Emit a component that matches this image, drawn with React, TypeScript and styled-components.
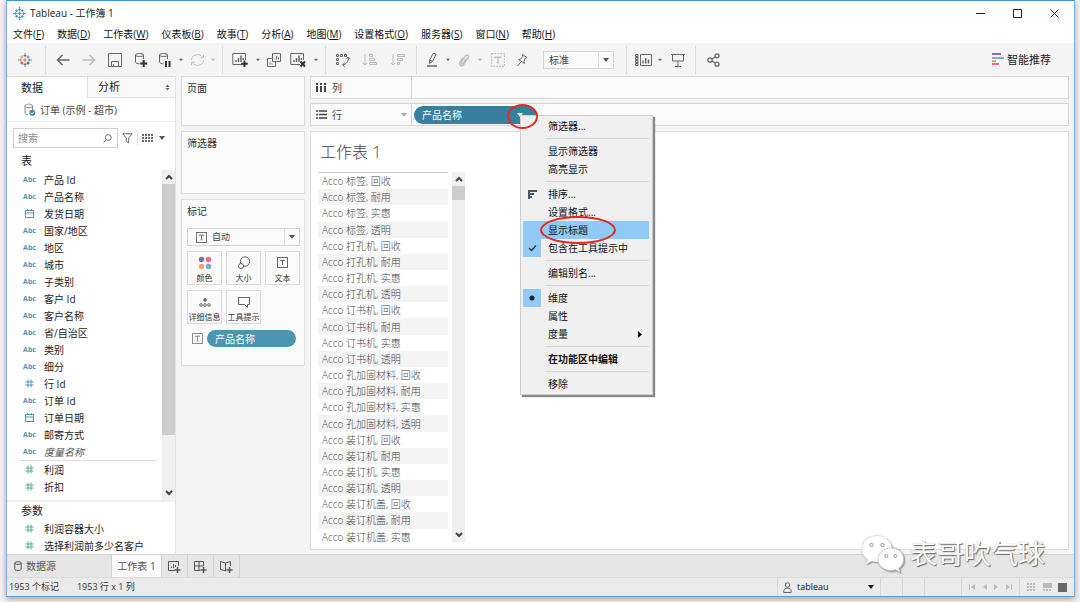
import React from 'react';
import styled, { createGlobalStyle, css } from 'styled-components';

const blue = '#4b97b3';
const green = '#4fb08c';
const line = '#dcdcdc';
const grey = '#666';

const GlobalStyle = createGlobalStyle`
  * { box-sizing: border-box; }
  html, body { margin: 0; padding: 0; background: #f3f3f3; }
  body, button, input, select {
    font-family: 'Open Sans', 'Noto Sans CJK SC', sans-serif;
    font-size: 10px;
    line-height: 16px;
    color: #333;
  }
  button { border: 0; padding: 0; margin: 0; background: none; }
  h1, h2, ul { margin: 0; padding: 0; font-weight: 400; list-style: none; }
  svg { display: block; flex: none; }
`;

/* ---------- window ---------- */
const Page = styled.div`
  height: 100vh;
  padding: 0 5px 5px 6px;
  overflow: hidden;
`;
const Window = styled.div`
  height: 100%;
  display: flex;
  flex-direction: column;
  position: relative;
  border: 1px solid #7db3e2;
  border-top-color: #4496da;
  border-bottom-color: #5c9fd6;
  background: #f4f4f4;
  box-shadow: 0 2px 6px rgba(0, 0, 0, 0.35);
`;
const TitleBar = styled.header`
  height: 24px;
  flex: none;
  display: flex;
  align-items: center;
  gap: 4px;
  padding: 0 14px 0 6px;
  background: #fff;
  color: #222;
`;
const WindowButtons = styled.div`
  margin-left: auto;
  display: flex;
  gap: 25px;
`;
const WindowButton = styled.button`
  width: 12px;
  height: 12px;
  display: grid;
  place-items: center;
`;
const MenuBar = styled.nav`
  height: 18px;
  flex: none;
  display: flex;
  align-items: center;
  gap: 13px;
  padding: 0 6px;
  background: #fff;
`;
const MenuButton = styled.button`
  color: #111;
  white-space: nowrap;
`;

/* ---------- toolbar ---------- */
const Toolbar = styled.div`
  height: 33px;
  flex: none;
  display: flex;
  align-items: center;
  padding: 0 23px 0 2px;
`;
const Tool = styled.button<{ $w?: number; $off?: boolean }>`
  width: ${(p) => p.$w ?? 26}px;
  height: 26px;
  flex: none;
  display: grid;
  place-items: center;
  color: ${(p) => (p.$off ? '#bdbdbd' : '#666')};
`;
const Divider = styled.span`
  width: 1px;
  height: 28px;
  margin: 0 4px;
  background: ${line};
`;
const Recommend = styled.button`
  margin-left: auto;
  display: flex;
  align-items: center;
  gap: 3px;
  font-size: 11px;
  color: #222;
`;
const SelectBox = styled.div<{ $kind: 'toolbar' | 'card' | 'status' }>`
  height: 18px;
  display: flex;
  align-items: center;
  color: ${grey};
  ${(p) =>
    p.$kind !== 'status' &&
    css`
      border: 1px solid #d4d4d4;
      background: #fafafa;
    `}
  ${(p) => p.$kind === 'toolbar' && css`width: 71px; margin: 0 8px 0 10px;`}
  ${(p) => p.$kind === 'card' && css`width: 113px; padding-left: 8px; margin-top: 9px;`}
  ${(p) => p.$kind === 'status' && css`width: 103px; padding: 0 2px 0 5px;`}
`;
const Select = styled.select<{ $small?: boolean; $dark?: boolean }>`
  appearance: none;
  flex: 1;
  min-width: 0;
  height: 16px;
  padding: 0 5px;
  border: 0;
  background: transparent;
  font-size: ${(p) => (p.$small ? 9 : 10)}px;
  color: ${(p) => (p.$dark ? '#111' : '#444')};
`;
const SelectArrow = styled.span<{ $plain?: boolean }>`
  width: 15px;
  height: 100%;
  flex: none;
  display: grid;
  place-items: center;
  border-left: ${(p) => (p.$plain ? '0' : '1px solid #dedede')};
  color: ${(p) => (p.$plain ? '#111' : '#555')};
  pointer-events: none;
`;

/* ---------- body ---------- */
const Body = styled.main`
  flex: 1;
  min-height: 0;
  display: flex;
  gap: 5px;
  padding-right: 5px;
`;
const DataPane = styled.aside`
  width: 169px;
  flex: none;
  display: flex;
  flex-direction: column;
  background: #fff;
  border-top: 1px solid ${line};
  border-right: 1px solid #e2e2e2;
`;
const PaneTabs = styled.div`
  display: flex;
  height: 21px;
  flex: none;
`;
const PaneTab = styled.button<{ $active?: boolean }>`
  width: ${(p) => (p.$active ? '80px' : 'auto')};
  flex: ${(p) => (p.$active ? 'none' : '1')};
  display: flex;
  align-items: center;
  justify-content: space-between;
  padding: 0 5px 0 ${(p) => (p.$active ? 14 : 10)}px;
  font-size: 11px;
  color: #222;
  ${(p) =>
    !p.$active &&
    css`
      background: #f9f9f9;
      border-left: 1px solid ${line};
      border-bottom: 1px solid ${line};
    `}
`;
const Source = styled.button`
  height: 24px;
  flex: none;
  display: flex;
  align-items: center;
  gap: 4px;
  padding-left: 17px;
  border-bottom: 1px solid #ececec;
  color: #444;
`;
const SearchRow = styled.div`
  display: flex;
  align-items: center;
  gap: 4px;
  padding: 6px 10px 4px 6px;
  color: ${grey};
`;
const SearchField = styled.label`
  width: 105px;
  height: 20px;
  display: flex;
  align-items: center;
  border: 1px solid #d0d0d0;
  padding-right: 5px;
`;
const SearchInput = styled.input`
  flex: 1;
  min-width: 0;
  border: 0;
  padding: 0 0 0 4px;
  outline: 0;
  &::placeholder { color: #8c8c8c; }
`;
const GroupTitle = styled.h2`
  flex: none;
  padding-left: 14px;
  font-size: 11px;
  line-height: 18px;
  color: #222;
`;
const FieldArea = styled.div`
  flex: 1;
  min-height: 0;
  display: flex;
  overflow: hidden;
`;
const FieldList = styled.ul`
  flex: 1;
  padding-top: 1px;
`;
const Field = styled.li<{ $italic?: boolean }>`
  height: 17px;
  display: flex;
  align-items: center;
  gap: 7px;
  padding-left: 15px;
  color: ${(p) => (p.$italic ? '#555' : '#222')};
  font-style: ${(p) => (p.$italic ? 'italic' : 'normal')};
  white-space: nowrap;
`;
const FieldType = styled.span<{ $color: string }>`
  width: 15px;
  display: grid;
  place-items: center;
  font: bold 7px/16px 'Open Sans', sans-serif;
  color: ${(p) => p.$color};
`;
const FieldRule = styled.li`
  height: 1px;
  margin: 0 6px 0 12px;
  background: #ddd;
`;
const Params = styled.section`
  flex: none;
  border-top: 2px solid #efefef;
`;

const ScrollTrack = styled.div<{ $end?: number }>`
  width: 13px;
  flex: none;
  display: flex;
  flex-direction: column;
  align-items: stretch;
  margin-bottom: ${(p) => p.$end ?? 0}px;
  background: #f0f0f0;
`;
const ScrollButton = styled.button`
  height: 14px;
  flex: none;
  display: grid;
  place-items: center;
`;
const ScrollThumb = styled.div<{ $share: number }>`
  height: ${(p) => p.$share}%;
  background: #cdcdcd;
`;
const ScrollRest = styled.div`
  flex: 1;
`;

/* ---------- cards ---------- */
const Cards = styled.div`
  width: 124px;
  flex: none;
  display: flex;
  flex-direction: column;
  gap: 5px;
`;
const Card = styled.section<{ $h: number }>`
  min-height: ${(p) => p.$h}px;
  border: 1px solid ${line};
  background: #fafafa;
  padding: 3px 5px;
`;
const CardTitle = styled.h2`
  font-size: 10px;
  line-height: 16px;
  color: #333;
`;
const MarkGrid = styled.div`
  display: grid;
  grid-template-columns: repeat(3, 35px);
  grid-auto-rows: 34px;
  gap: 5px 4px;
  margin: 5px 0 6px;
`;
const MarkButton = styled.button`
  display: flex;
  flex-direction: column;
  align-items: center;
  justify-content: space-between;
  border: 1px solid ${line};
  padding-top: 4px;
  font-size: 8px;
  line-height: 12px;
  color: #333;
  white-space: nowrap;
  svg { color: #666; }
`;
const MarkRow = styled.div`
  display: flex;
  align-items: center;
  gap: 4px;
  padding-left: 5px;
  color: #888;
`;
const Pill = styled.button<{ $w: number; $dark?: boolean }>`
  width: ${(p) => p.$w}px;
  height: ${(p) => (p.$dark ? 18 : 17)}px;
  display: flex;
  align-items: center;
  justify-content: space-between;
  padding: 0 13px 0 8px;
  border-radius: 9px;
  background: ${(p) => (p.$dark ? '#377f9c' : '#4996b2')};
  color: #fff;
`;

/* ---------- shelves and sheet ---------- */
const Workspace = styled.div`
  flex: 1;
  min-width: 0;
  display: flex;
  flex-direction: column;
  padding-bottom: 4px;
`;
const Shelf = styled.div`
  height: 23px;
  flex: none;
  display: flex;
  align-items: center;
  position: relative;
  margin-bottom: 4px;
  border: 1px solid #d6d6d6;
  background: #fafafa;
`;
const ShelfName = styled.div`
  width: 101px;
  height: 100%;
  display: flex;
  align-items: center;
  gap: 5px;
  padding: 0 4px 0 5px;
  margin-right: 2px;
  border-right: 1px solid #d6d6d6;
  color: #444;
`;
const Push = styled.span<{ $dark?: boolean }>`
  margin-left: auto;
  color: ${(p) => (p.$dark ? '#555' : '#aaa')};
`;
const Sheet = styled.section`
  flex: 1;
  min-height: 0;
  display: flex;
  flex-direction: column;
  margin-top: 1px;
  border: 1px solid ${line};
  background: #fff;
`;
const SheetTitle = styled.h1`
  flex: none;
  padding: 8px 0 8px 9px;
  font-size: 16px;
  line-height: 24px;
  font-weight: 300;
  color: #444;
`;
const SheetBody = styled.div`
  flex: 1;
  min-height: 0;
  display: flex;
  gap: 4px;
  padding-left: 7px;
`;
const Rows = styled.table`
  width: 130px;
  height: 373px;
  border-collapse: collapse;
  border-top: 1px solid #ccc;
  font-weight: 300;
  color: #444;
  tr:nth-child(even) { background: #f4f4f4; }
  td { padding: 0 0 0 4px; line-height: 14px; white-space: nowrap; }
`;

/* ---------- context menu ---------- */
const ContextMenu = styled.div`
  position: absolute;
  top: 11px;
  left: 209px;
  width: 133px;
  padding: 1px 3px 1px 2px;
  border: 1px solid #cfcfcf;
  background: #f0f0f0;
  box-shadow: 2px 2px 1px #888;
  z-index: 2;
`;
const MenuItem = styled.button<{ $hot?: boolean; $bold?: boolean }>`
  width: 100%;
  height: 18px;
  display: flex;
  align-items: center;
  padding-right: 7px;
  background: ${(p) => (p.$hot ? '#91c9f7' : 'transparent')};
  font-weight: ${(p) => (p.$bold ? 700 : 400)};
  color: #111;
`;
const MenuMark = styled.span<{ $on?: boolean }>`
  width: 18px;
  height: 18px;
  margin-right: 7px;
  display: grid;
  place-items: center;
  background: ${(p) => (p.$on ? '#91c9f7' : 'transparent')};
`;
const MenuRule = styled.div`
  height: 1px;
  margin: 3px 0 3px 22px;
  background: #d7d7d7;
`;
const Ring = styled.span<{ $x: number; $y: number; $w: number; $h: number }>`
  position: absolute;
  left: ${(p) => p.$x}px;
  top: ${(p) => p.$y}px;
  width: ${(p) => p.$w}px;
  height: ${(p) => p.$h}px;
  border: 2px solid #e5281b;
  border-radius: 50%;
  z-index: 3;
  pointer-events: none;
`;

/* ---------- bottom bars ---------- */
const SheetTabs = styled.nav`
  height: 24px;
  flex: none;
  display: flex;
  background: #e6e6e6;
  border-top: 1px solid #d4d4d4;
  border-bottom: 1px solid #dadada;
`;
const SheetTab = styled.button<{ $w: number; $active?: boolean }>`
  width: ${(p) => p.$w}px;
  display: flex;
  align-items: center;
  justify-content: ${(p) => (p.$w > 100 ? 'flex-start' : 'center')};
  gap: 4px;
  padding-left: ${(p) => (p.$w > 100 ? 7 : 0)}px;
  border-right: 1px solid #d2d2d2;
  background: ${(p) => (p.$active ? '#fafafa' : 'transparent')};
  color: #555;
  white-space: nowrap;
`;
const StatusBar = styled.footer`
  height: 18px;
  flex: none;
  display: flex;
  align-items: center;
  gap: 18px;
  padding-left: 2px;
  background: #ebebeb;
  font-size: 9px;
`;
const StatusTools = styled.div`
  margin-left: auto;
  height: 100%;
  display: flex;
`;
const StatusCell = styled.div<{ $w: number }>`
  width: ${(p) => p.$w}px;
  display: flex;
  align-items: center;
  justify-content: space-evenly;
  border-left: 1px solid #d6d6d6;
  color: #bbb;
`;
const Watermark = styled.div`
  position: absolute;
  right: 29px;
  bottom: 22px;
  display: flex;
  align-items: center;
  gap: 6px;
  font-size: 27px;
  line-height: 40px;
  color: #fff;
  text-shadow: 1px 1px 1px #666, 0 0 1px #999;
  white-space: nowrap;
  z-index: 4;
  svg { filter: drop-shadow(1px 1px 0 #999) drop-shadow(0 0 1px #aaa); }
`;

/* ---------- drawings ---------- */
type IconProps = { w?: number; h?: number; sw?: number; children: React.ReactNode };
const Icon = ({ w = 16, h = 16, sw = 1, children }: IconProps) => (
  <svg width={w} height={h} viewBox={`0 0 ${w} ${h}`} fill="none" stroke="currentColor" strokeWidth={sw} aria-hidden="true">
    {children}
  </svg>
);
const Down = ({ w = 5 }: { w?: number }) => (
  <svg width={w} height={4} viewBox="0 0 6 4" aria-hidden="true"><path d="M0 0h6L3 4z" fill="currentColor" /></svg>
);
const Chevron = ({ up }: { up?: boolean }) => (
  <Icon w={8} h={6} sw={2}>{up ? <path d="M1 5l3-3 3 3" stroke="#444" /> : <path d="M1 1l3 3 3-3" stroke="#444" />}</Icon>
);

const crosses: [number, number, number, string][] = [
  [8, 8, 2.4, '#e8762c'], [8, 3, 1.6, '#5c6692'], [8, 13, 1.6, '#5c6692'], [3, 8, 1.5, '#7199a6'], [13, 8, 1.5, '#5b879b'],
  [4.5, 4.5, 1.7, '#eb912c'], [11.5, 4.5, 1.7, '#59879b'], [4.5, 11.5, 1.7, '#c72035'], [11.5, 11.5, 1.7, '#1f447e'],
  [8, 0.8, 0.7, '#9fa3c0'], [8, 15.2, 0.7, '#9fa3c0'], [0.8, 8, 0.7, '#d2858f'], [15.2, 8, 0.7, '#9fa3c0'],
];
const Logo = ({ size, mono }: { size: number; mono?: boolean }) => (
  <svg width={size} height={size} viewBox="0 0 16 16" aria-hidden="true">
    {mono && <rect width="16" height="16" fill="#edf5f8" />}
    {crosses.map(([x, y, r, c], i) => (
      <path key={i} d={`M${x - r} ${y}h${2 * r}M${x} ${y - r}v${2 * r}`} stroke={mono ? '#3b8fb0' : c} strokeWidth="1.1" />
    ))}
  </svg>
);
const TBox = ({ dashed, size = 12 }: { dashed?: boolean; size?: number }) => (
  <svg width={size} height={size} viewBox="0 0 12 12" fill="none" stroke="currentColor" aria-hidden="true">
    <rect x=".5" y=".5" width="11" height="11" strokeDasharray={dashed ? '1.5 1' : undefined} />
    <path d="M3.5 4.5v-1h5v1M6 3.5v5M5 8.500h2" />
  </svg>
);
const DbShape = () => <path d="M1.5 3v7c0 1 2 1.8 4 1.8M9.5 3v4M1.5 3c0-2 8-2 8 0s-8 2-8 0z" />;
const Hash = () => <Icon w={9} h={9}><path d="M3 .5v8M6 .5v8M.5 3h8M.5 6h8" /></Icon>;
const Calendar = () => <Icon w={9} h={9}><path d="M.5 1.500h8v7h-8zM.5 4h8M2.500 0v1.500M6.500 0v1.500" /></Icon>;
const Cylinder = () => <Icon w={8} h={10}><path d="M.8 2v6c0 2 6.400 2 6.400 0V2M.8 2c0-1.800 6.400-1.800 6.400 0s-6.400 1.800-6.400 0z" /></Icon>;
const NewChart = ({ cross }: { cross?: boolean }) => (
  <Icon w={17} h={16}>
    <path d="M10 12.500H.8V1.500h12.700V8" />
    <path d="M4 10V8M6.500 10V6M9 10V3.500M11.300 8V6" strokeWidth="1.500" />
    {cross ? <path d="M10.500 9.500l4.500 5M15 9.500l-4.500 5" stroke="#333" strokeWidth="2" /> : <path d="M12.500 8.500v6.500M9.200 11.800h6.600" stroke="#333" strokeWidth="2" />}
  </Icon>
);
const WeChat = () => (
  <svg width="43" height="39" viewBox="0 0 43 39" aria-hidden="true">
    <path d="M16 1C7.500 1 1 7 1 14.200c0 4.200 2.200 7.700 5.700 10.200L5.200 29l5.500-2.800c1.700.5 3.500.8 5.300.8C24.500 27 31 21 31 14S24.500 1 16 1z" fill="#fff" />
    <path d="M30 13c-7.300 0-13 5-13 11.200S22.700 35.500 30 35.500c1.600 0 3.100-.3 4.500-.7l4.600 2.600-1.300-4c3-2.100 4.900-5.400 4.900-9.200C42.700 18 37.300 13 30 13z" fill="#fff" stroke="#bbb" strokeWidth=".7" />
    <g fill="#fff" stroke="#999"><circle cx="10.500" cy="10" r="1.700" /><circle cx="21.500" cy="10" r="1.700" /><circle cx="25.500" cy="21" r="1.500" /><circle cx="34.500" cy="21" r="1.500" /></g>
  </svg>
);

/* ---------- data ---------- */
const menus = [['文件', 'F'], ['数据', 'D'], ['工作表', 'W'], ['仪表板', 'B'], ['故事', 'T'], ['分析', 'A'], ['地图', 'M'], ['设置格式', 'O'], ['服务器', 'S'], ['窗口', 'N'], ['帮助', 'H']];
type Kind = 'abc' | 'num' | 'date';
const dimensions: [string, Kind][] = [
  ['产品 Id', 'abc'], ['产品名称', 'abc'], ['发货日期', 'date'], ['国家/地区', 'abc'], ['地区', 'abc'], ['城市', 'abc'],
  ['子类别', 'abc'], ['客户 Id', 'abc'], ['客户名称', 'abc'], ['省/自治区', 'abc'], ['类别', 'abc'], ['细分', 'abc'],
  ['行 Id', 'num'], ['订单 Id', 'abc'], ['订单日期', 'date'], ['邮寄方式', 'abc'], ['度量名称', 'abc'],
];
const kinds = ['回收', '耐用', '实惠', '透明'];
const products = ['标签', '打孔机', '订书机', '孔加固材料', '装订机', '装订机盖']
  .flatMap((n) => kinds.map((k) => `Acco ${n}, ${k}`))
  .slice(0, 23);

const FieldRow = ({ name, kind, color = blue }: { name: string; kind: Kind; color?: string }) => (
  <Field $italic={name === '度量名称'}>
    <FieldType $color={color}>{kind === 'abc' ? 'Abc' : kind === 'num' ? <Hash /> : <Calendar />}</FieldType>
    {name}
  </Field>
);

const Scrollbar = ({ share, end }: { share: number; end?: number }) => (
  <ScrollTrack $end={end}>
    <ScrollButton aria-label="向上滚动"><Chevron up /></ScrollButton>
    <ScrollRest><ScrollThumb $share={share} /></ScrollRest>
    <ScrollButton aria-label="向下滚动"><Chevron /></ScrollButton>
  </ScrollTrack>
);

const Item = ({ text, mark, on, hot, bold, sub }: { text: string; mark?: React.ReactNode; on?: boolean; hot?: boolean; bold?: boolean; sub?: boolean }) => (
  <MenuItem role="menuitem" $hot={hot} $bold={bold}>
    <MenuMark $on={on}>{mark}</MenuMark>
    {text}
    {sub && <Push><svg width="4" height="7" viewBox="0 0 4 7"><path d="M0 0l4 3.500-4 3.500z" fill="#111" /></svg></Push>}
  </MenuItem>
);

const Tools = () => (
  <Toolbar>
    <Tool $w={32} aria-label="起始页"><Logo size={14} /></Tool>
    <Divider />
    <Tool aria-label="撤消"><Icon sw={1.6}><path d="M14.500 8H2.500M7.500 3l-5 5 5 5" /></Icon></Tool>
    <Tool $off aria-label="重做"><Icon sw={1.6}><path d="M1.500 8h12M8.500 3l5 5-5 5" /></Icon></Tool>
    <Tool aria-label="保存"><Icon w={14} h={14}><path d="M.5.5h13v13H.5zM3.500 13V8.500h7V13M5.500 11v2" /></Icon></Tool>
    <Tool aria-label="新建数据源"><Icon w={14}><DbShape /><path d="M9.700 8v7M6.200 11.500h7" stroke="#333" strokeWidth="2" /></Icon></Tool>
    <Tool $w={22} aria-label="暂停自动更新"><Icon w={14}><DbShape /><path d="M8 9v6M11.500 9v6" stroke="#333" strokeWidth="2" /></Icon></Tool>
    <Tool $w={10} aria-label="更新选项"><Down w={4} /></Tool>
    <Tool $w={22} $off aria-label="运行更新"><Icon w={15} h={14}><path d="M1.500 7a6 5.500 0 0 1 11.200-2.500M13.500 7A6 5.500 0 0 1 2.300 9.500M13.500 1.800v3h-3M1.500 12.200v-3h3" /></Icon></Tool>
    <Tool $w={10} $off aria-label="运行选项"><Down w={4} /></Tool>
    <Divider />
    <Tool aria-label="新建工作表"><NewChart /></Tool>
    <Tool $w={10} aria-label="新建选项"><Down w={4} /></Tool>
    <Tool $w={22} aria-label="复制"><Icon w={14} h={14}><path d="M5.500.5h8v8h-8zM5 5.500H.5v8h8V9M8 6.500v-1M9.700 6.500V3M11.500 6.500V4.500M3 11.500v-2M5 11.500v-1" /></Icon></Tool>
    <Tool aria-label="清除工作表"><NewChart cross /></Tool>
    <Tool $w={10} aria-label="清除选项"><Down w={4} /></Tool>
    <Divider />
    <Tool aria-label="交换行和列">
      <Icon>
        <path d="M1.500 2.500h2v2h-2zM5.500 2.500h2v2h-2zM9.500 2.500h2v2h-2zM1.500 6.500h2v2h-2zM1.500 10.500h2v2h-2z" />
        <path d="M13.300 5.500c.3 4-1.800 6.800-5.500 7.300M11.500 7l1.800-2 1.900 2M9.700 10.800l-2.200 2 2.200 2" />
      </Icon>
    </Tool>
    <Tool $w={28} $off aria-label="升序排序"><Icon><path d="M3 2v11M.8 10.800L3 13l2.200-2.200M7.500 2.500h3v2h-3zM7.500 6.500h5v2h-5zM7.500 10.500h7v2h-7z" /></Icon></Tool>
    <Tool $w={28} $off aria-label="降序排序"><Icon><path d="M3 2v11M.8 10.800L3 13l2.200-2.200M7.500 2.500h7v2h-7zM7.500 6.500h5v2h-5zM7.500 10.500h2v2h-2z" /></Icon></Tool>
    <Divider />
    <Tool $w={22} aria-label="突出显示"><Icon w={12}><path d="M3.500 8l4-7 2.500 1.300L6.500 9.500l-3 2zM3.500 8l3 1.500" /><path d="M1 14h10" strokeWidth="2" stroke="#888" /></Icon></Tool>
    <Tool $w={10} aria-label="突出显示选项"><Down w={4} /></Tool>
    <Tool $w={22} $off aria-label="组成员"><Icon w={12} h={14} sw={1.300}><path d="M9 5l-4 5.500c-1 1.300-2.700.2-1.900-1.200L7.500 3c1.500-2 4-.4 2.800 1.600L5.800 11.500c-2 2.700-5.500.6-3.900-2.300L5 4.500" /></Icon></Tool>
    <Tool $w={10} $off aria-label="组选项"><Down w={4} /></Tool>
    <Tool $off aria-label="显示标记标签"><TBox dashed size={14} /></Tool>
    <Tool $w={22} aria-label="固定轴"><Icon w={12} h={14}><path d="M6.500 1.500l4.500 3-2 .8-1 3.200.5 2L2.500 6.500l2-.3 2.300-2.500zM5 9l-3.500 4" /></Icon></Tool>
    <SelectBox $kind="toolbar">
      <Select aria-label="适合"><option>标准</option></Select>
      <SelectArrow><Down w={6} /></SelectArrow>
    </SelectBox>
    <Divider />
    <Tool $w={24} aria-label="显示/隐藏卡"><Icon w={17} h={12}><path d="M5.500.5h11v11h-11zM.5.500H3v2H.5zM.5 3.500H3v2H.5zM.5 6.500H3v2H.5zM.5 9.500H3v2H.5z" /><path d="M8 9.500v-3M10.700 9.500V4M13.500 9.500V5.500" strokeWidth="1.500" /></Icon></Tool>
    <Tool $w={10} aria-label="卡选项"><Down w={4} /></Tool>
    <Tool aria-label="演示模式"><Icon w={14} h={14}><path d="M0 1.500h14M1.500 1.500v6.500h11V1.500M7 8v5M4 13.500h6" /></Icon></Tool>
    <Divider />
    <Tool $w={28} aria-label="共享"><Icon w={14} h={14} sw={1.300}><circle cx="3" cy="7" r="2.200" /><circle cx="10" cy="2.800" r="2" /><circle cx="10" cy="11.200" r="2" /><path d="M5 6l3.200-2M5 8l3.200 2" /></Icon></Tool>
    <Recommend>
      <svg width="12" height="13" viewBox="0 0 12 13" aria-hidden="true"><path d="M0 1h9" stroke="#85709b" strokeWidth="2" /><path d="M0 5h12" stroke="#7fa8cf" strokeWidth="2" /><path d="M0 8h4" stroke="#f2a479" strokeWidth="2" /><path d="M0 11h7" stroke="#f06a80" strokeWidth="2" /></svg>
      智能推荐
    </Recommend>
  </Toolbar>
);

export default function App() {
  return (
    <Page>
      <GlobalStyle />
      <Window>
        <TitleBar>
          <Logo size={13} mono />
          Tableau - 工作簿 1
          <WindowButtons>
            <WindowButton aria-label="最小化"><Icon w={9} h={9}><path d="M0 4.500h9" stroke="#222" /></Icon></WindowButton>
            <WindowButton aria-label="最大化"><Icon w={9} h={9}><path d="M.5.5h8v8h-8z" stroke="#222" /></Icon></WindowButton>
            <WindowButton aria-label="关闭"><Icon w={9} h={9}><path d="M.5.5l8 8M8.500.5l-8 8" stroke="#222" /></Icon></WindowButton>
          </WindowButtons>
        </TitleBar>
        <MenuBar>
          {menus.map(([name, key]) => <MenuButton key={key}>{name}(<u>{key}</u>)</MenuButton>)}
        </MenuBar>
        <Tools />
        <Body>
          <DataPane>
            <PaneTabs>
              <PaneTab $active>数据</PaneTab>
              <PaneTab>分析<svg width="5" height="7" viewBox="0 0 6 7"><path d="M3 0l2.500 3h-5zM3 7L.5 4h5z" fill="#666" /></svg></PaneTab>
            </PaneTabs>
            <Source>
              <Icon w={12} h={13}><path d="M1 3v7c0 1 1.500 1.500 3 1.500M8.500 3v4M1 3c0-2.500 7.500-2.500 7.500 0s-7.500 2-7.500 0" stroke="#888" /><circle cx="8.300" cy="9.700" r="3" fill="#3f86a5" stroke="none" /><path d="M6.800 9.700l1.200 1.200 2-2.200" stroke="#fff" /></Icon>
              订单 (示例 - 超市)
            </Source>
            <SearchRow>
              <SearchField>
                <SearchInput placeholder="搜索" aria-label="搜索" />
                <Icon w={9} h={9}><circle cx="5.300" cy="3.500" r="2.900" /><path d="M3.300 5.700L.7 8.500" /></Icon>
              </SearchField>
              <Icon w={11} h={11}><path d="M.8.8h9.400L6.700 5v5L4.300 8.500V5z" /></Icon>
              <Icon w={16} h={14}><path d="M.5 0v14" stroke="#ddd" /><path d="M5 4h11M5 7h11M5 10h11" strokeWidth="2" strokeDasharray="2 1" /></Icon>
              <Push $dark><Down w={6} /></Push>
            </SearchRow>
            <GroupTitle>表</GroupTitle>
            <FieldArea>
              <FieldList>
                {dimensions.map(([n, k]) => <FieldRow key={n} name={n} kind={k} />)}
                <FieldRule />
                <FieldRow name="利润" kind="num" color={green} />
                <FieldRow name="折扣" kind="num" color={green} />
              </FieldList>
              <Scrollbar share={83} />
            </FieldArea>
            <Params>
              <GroupTitle>参数</GroupTitle>
              <ul>
                <FieldRow name="利润容器大小" kind="num" color={green} />
                <FieldRow name="选择利润前多少名客户" kind="num" color={green} />
              </ul>
            </Params>
          </DataPane>

          <Cards>
            <Card $h={50}><CardTitle>页面</CardTitle></Card>
            <Card $h={63}><CardTitle>筛选器</CardTitle></Card>
            <Card $h={167}>
              <CardTitle>标记</CardTitle>
              <SelectBox $kind="card">
                <TBox size={11} />
                <Select $small aria-label="标记类型"><option>自动</option></Select>
                <SelectArrow><Down w={6} /></SelectArrow>
              </SelectBox>
              <MarkGrid>
                <MarkButton><svg width="14" height="14" viewBox="0 0 14 14"><circle cx="3.500" cy="3.500" r="2.700" fill="#85709b" /><circle cx="10.500" cy="3.500" r="2.700" fill="#f06a80" /><circle cx="3.500" cy="10.500" r="2.700" fill="#f2a479" /><circle cx="10.500" cy="10.500" r="2.700" fill="#7fa8cf" /></svg>颜色</MarkButton>
                <MarkButton><Icon w={14} h={14}><circle cx="8" cy="5.500" r="4.700" /><circle cx="4" cy="10" r="2.500" fill="#fafafa" /></Icon>大小</MarkButton>
                <MarkButton><Icon w={14} h={14}><rect x="1.500" y="1.500" width="10" height="10" /><path d="M4.500 5V4.500h4V5M6.500 4.500v4.500" /></Icon>文本</MarkButton>
                <MarkButton><Icon w={14} h={14}><circle cx="7" cy="5" r="1.300" fill="#555" /><circle cx="3" cy="10" r="1.300" /><circle cx="7" cy="10" r="1.300" /><circle cx="11" cy="10" r="1.300" /></Icon>详细信息</MarkButton>
                <MarkButton><Icon w={14} h={14}><path d="M1.500 2.500h11v7h-2v3l-3-3h-6z" /></Icon>工具提示</MarkButton>
              </MarkGrid>
              <MarkRow><TBox size={11} /><Pill $w={89}>产品名称</Pill></MarkRow>
            </Card>
          </Cards>

          <Workspace>
            <Shelf>
              <ShelfName><Icon w={11} h={11} sw={2}><path d="M1 4v6M5 4v6M9 4v6M1 1v2M5 1v2M9 1v2" /></Icon>列</ShelfName>
            </Shelf>
            <Shelf>
              <ShelfName>
                <Icon w={11} h={9} sw={1.500}><path d="M3 1h8M3 4.500h8M3 8h8M0 1h2M0 4.500h2M0 8h2" /></Icon>行
                <Push><Down w={6} /></Push>
              </ShelfName>
              <Pill $w={122} $dark>产品名称<Down w={6} /></Pill>
              <ContextMenu role="menu">
                <Item text="筛选器..." />
                <MenuRule />
                <Item text="显示筛选器" />
                <Item text="高亮显示" />
                <MenuRule />
                <Item text="排序..." mark={<Icon w={9} h={9} sw={2}><path d="M0 1h9M0 4h6M0 7h4M1 1v8" stroke="#4a586e" /></Icon>} />
                <Item text="设置格式..." />
                <Item text="显示标题" hot />
                <Item text="包含在工具提示中" on mark={<Icon w={9} h={8} sw={1.300}><path d="M1 4l2.500 2.500L8 1.500" stroke="#333" /></Icon>} />
                <MenuRule />
                <Item text="编辑别名..." />
                <MenuRule />
                <Item text="维度" on mark={<svg width="6" height="6" viewBox="0 0 6 6"><circle cx="3" cy="3" r="2.500" fill="#222" /></svg>} />
                <Item text="属性" />
                <Item text="度量" sub />
                <MenuRule />
                <Item text="在功能区中编辑" bold />
                <MenuRule />
                <Item text="移除" />
              </ContextMenu>
              <Ring $x={196} $y={0} $w={31} $h={25} />
              <Ring $x={229} $y={112} $w={76} $h={28} />
            </Shelf>
            <Sheet>
              <SheetTitle>工作表 1</SheetTitle>
              <SheetBody>
                <Rows><tbody>{products.map((p) => <tr key={p}><td>{p}</td></tr>)}</tbody></Rows>
                <Scrollbar share={4} end={7} />
              </SheetBody>
            </Sheet>
          </Workspace>
        </Body>

        <SheetTabs>
          <SheetTab $w={105}><Cylinder />数据源</SheetTab>
          <SheetTab $w={50} $active>工作表 1</SheetTab>
          <SheetTab $w={26} aria-label="新建工作表"><Icon w={13} h={13}><path d="M7 10.500H.5v-9h10V6M3.500 8V6.500M5.500 8V4M7.500 7V5" /><path d="M9.500 7v6M6.500 10h6" strokeWidth="1.500" /></Icon></SheetTab>
          <SheetTab $w={26} aria-label="新建仪表板"><Icon w={13} h={13}><path d="M6 10.500H.5v-9h9V6M.5 6h9M5 1.500v9" /><path d="M9.500 7v6M6.500 10h6" strokeWidth="1.500" /></Icon></SheetTab>
          <SheetTab $w={26} aria-label="新建故事"><Icon w={13} h={13}><path d="M6 11L.5 9.500v-8L5.500 3l5-1.500V6M5.500 3v8" /><path d="M9.500 7v6M6.500 10h6" strokeWidth="1.500" /></Icon></SheetTab>
        </SheetTabs>
        <StatusBar>
          <span>1953 个标记</span>
          <span>1953 行 x 1 列</span>
          <StatusTools>
            <StatusCell $w={103}>
              <SelectBox $kind="status">
                <Icon w={9} h={11}><circle cx="4.500" cy="3" r="2.200" /><path d="M.8 10.500V8.500c0-3 7.400-3 7.400 0v2z" /></Icon>
                <Select $small $dark aria-label="用户"><option>tableau</option></Select>
                <SelectArrow $plain><Down w={6} /></SelectArrow>
              </SelectBox>
            </StatusCell>
            <StatusCell $w={22} />
            <StatusCell $w={22} />
            <StatusCell $w={37} />
            <StatusCell $w={58}>
              <svg width="6" height="6" viewBox="0 0 6 6" fill="currentColor"><path d="M0 0h1v6H0zM6 0v6L2 3z" /></svg>
              <svg width="4" height="6" viewBox="0 0 4 6" fill="currentColor"><path d="M4 0v6L0 3z" /></svg>
              <svg width="4" height="6" viewBox="0 0 4 6" fill="currentColor"><path d="M0 0v6l4-3z" /></svg>
              <svg width="6" height="6" viewBox="0 0 6 6" fill="currentColor"><path d="M5 0h1v6H5zM0 0v6l4-3z" /></svg>
            </StatusCell>
            <StatusCell $w={55}>
              <svg width="9" height="9" viewBox="0 0 9 9"><path d="M0 1h9M0 4h9M0 7h9" stroke="#bbb" strokeWidth="2" strokeDasharray="2 1" /></svg>
              <svg width="9" height="9" viewBox="0 0 9 9"><path d="M0 0h9v5H0z" fill="#bbb" /><path d="M0 7h9" stroke="#bbb" strokeWidth="2" strokeDasharray="2 1" /></svg>
              <svg width="9" height="9" viewBox="0 0 9 9"><path d="M0 0h9v9H0z" fill="#666" /></svg>
            </StatusCell>
          </StatusTools>
        </StatusBar>
        <Watermark><WeChat />表哥吹气球</Watermark>
      </Window>
    </Page>
  );
}
